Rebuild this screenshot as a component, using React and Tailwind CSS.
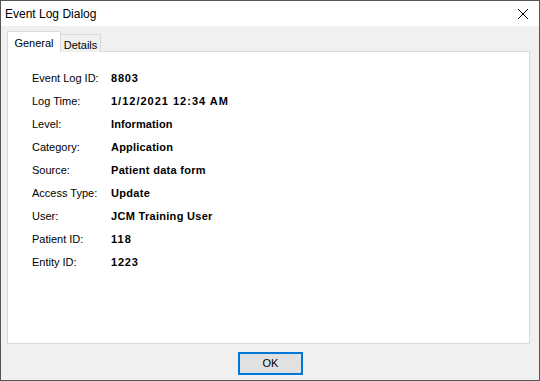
import React from "react";

const rows = [
  ["Event Log ID:", "8803", "tracking-[0.8px]"],
  ["Log Time:", "1/12/2021 12:34 AM", "tracking-[1px]"],
  ["Level:", "Information", "tracking-[0.1px]"],
  ["Category:", "Application", "tracking-[0.2px]"],
  ["Source:", "Patient data form", "tracking-[0.3px]"],
  ["Access Type:", "Update", "tracking-[0.3px]"],
  ["User:", "JCM Training User", "tracking-[0.3px]"],
  ["Patient ID:", "118", "tracking-[1px]"],
  ["Entity ID:", "1223", "tracking-[0.8px]"],
];

export default function App() {
  return (
    <div
      className="w-[540px] h-[381px] border border-[#555555] flex flex-col bg-[#f0f0f0] text-black"
      style={{ fontFamily: '"Liberation Sans", Arial, sans-serif' }}
    >
      <div className="h-[25px] bg-white flex items-center justify-between shrink-0">
        <span className="pl-[4px] text-[12px] leading-none">Event Log Dialog</span>
        <svg width="12" height="12" viewBox="0 0 12 12" className="mr-[10px]">
          <path d="M1 1 L11 11 M11 1 L1 11" stroke="#000" strokeWidth="1" />
        </svg>
      </div>
      <div className="flex-1 flex flex-col pl-[6px] pr-[9px] pt-[6px]">
        <div className="flex items-end h-[20px] relative z-10">
          <div className="h-[21px] w-[54px] bg-white border border-b-0 border-[#d9d9d9] flex items-start justify-center pt-[3px] text-[11px]">
            General
          </div>
          <div className="h-[18px] w-[40px] bg-[#f0f0f0] border border-l-0 border-b-0 border-[#d9d9d9] flex items-start justify-center pt-[2px] text-[11px]">
            Details
          </div>
        </div>
        <div className="h-[293px] bg-white border border-[#d9d9d9] -mt-px pt-[15px] pl-[24px] flex flex-col">
          {rows.map(([label, value, tr]) => (
            <div key={label} className="flex h-[23px] items-center text-[11px]">
              <span className="w-[79px]">{label}</span>
              <span className={`font-bold ${tr}`}>{value}</span>
            </div>
          ))}
        </div>
        <div className="flex-1 flex justify-center items-start pt-[8px]">
          <button className="ml-[4px] w-[65px] h-[23px] border-2 border-[#0078d7] bg-[#e1e1e1] text-[11px] leading-none flex items-center justify-center">
            OK
          </button>
        </div>
      </div>
    </div>
  );
}
